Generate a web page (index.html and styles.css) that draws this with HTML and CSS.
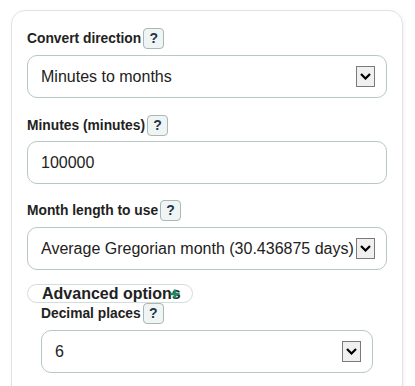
FILE: index.html
```html
<!DOCTYPE html>
<html lang="en">
<head>
    <meta charset="UTF-8">
    <meta name="viewport" content="width=device-width, initial-scale=1.0">
    <title>Minutes to Months</title>
    <link rel="stylesheet" href="styles.css">
</head>
<body>

    <div class="calc-card">
        <div class="label-row">
            <label for="direction">Convert direction</label>
            <button class="help" type="button">?</button>
        </div>
        <div class="select-wrap">
            <select id="direction">
                <option>Minutes to months</option>
                <option>Months to minutes</option>
            </select>
            <span class="arrow"><svg width="11" height="7" viewBox="0 0 11 7"><polyline points="1,1 5.5,5.5 10,1" fill="none" stroke="#000" stroke-width="2.2"/></svg></span>
        </div>

        <div class="label-row gap-top">
            <label for="minutes">Minutes (minutes)</label>
            <button class="help" type="button">?</button>
        </div>
        <input type="text" id="minutes" value="100000">

        <div class="label-row gap-top-sm">
            <label for="monthLength">Month length to use</label>
            <button class="help" type="button">?</button>
        </div>
        <div class="select-wrap">
            <select id="monthLength">
                <option>Average Gregorian month (30.436875 days)</option>
                <option>30 days</option>
                <option>31 days</option>
            </select>
            <span class="arrow"><svg width="11" height="7" viewBox="0 0 11 7"><polyline points="1,1 5.5,5.5 10,1" fill="none" stroke="#000" stroke-width="2.2"/></svg></span>
        </div>

        <div class="advanced">
            <div class="advanced-toggle">Advanced options<svg class="plus" width="10" height="10" viewBox="0 0 10 10"><path d="M5 0.5V9.5M0.5 5H9.5" stroke="#1f8a68" stroke-width="2.6"/></svg></div>
            <div class="advanced-body">
                <div class="label-row">
                    <label for="decimals">Decimal places</label>
                    <button class="help" type="button">?</button>
                </div>
                <div class="select-wrap">
                    <select id="decimals">
                        <option>6</option>
                        <option>4</option>
                        <option>2</option>
                    </select>
                    <span class="arrow"><svg width="11" height="7" viewBox="0 0 11 7"><polyline points="1,1 5.5,5.5 10,1" fill="none" stroke="#000" stroke-width="2.2"/></svg></span>
                </div>
            </div>
        </div>
    </div>

</body>
</html>
```

FILE: styles.css
```css
body {
    font-family: "Liberation Sans", Arial, sans-serif;
    margin: 0;
    color: #222;
    background: #fff;
}
.calc-card {
    margin: 10px 0 0 11px;
    width: 360px;
    padding: 17px 15px 30px 15px;
    border: 1px solid #dde4e3;
    border-radius: 14px;
    box-shadow: 1px 1px 4px rgba(0, 0, 0, 0.06);
}
.label-row {
    display: flex;
    align-items: center;
    height: 20px;
}
.gap-top {
    margin-top: 17px;
}
.gap-top-sm {
    margin-top: 16px;
}
label {
    font-size: 13.8px;
    font-weight: bold;
    color: #222;
}
.help {
    width: 21px;
    height: 21px;
    margin-left: 2px;
    padding: 0;
    border: 1px solid #a9b8b5;
    border-radius: 4px;
    background: #eef5f4;
    color: #1f3447;
    font-family: "Liberation Sans", Arial, sans-serif;
    font-size: 14px;
    font-weight: bold;
}
.select-wrap {
    position: relative;
    margin-top: 7px;
}
select, input {
    display: block;
    box-sizing: border-box;
    width: 100%;
    height: 43px;
    padding: 0 31px 0 13px;
    border: 1px solid #b9c8c5;
    border-radius: 10px;
    background: #fff;
    color: #222;
    font-family: "Liberation Sans", Arial, sans-serif;
    font-size: 16px;
    appearance: none;
    -webkit-appearance: none;
}
input {
    margin-top: 6px;
    padding-right: 13px;
}
.arrow {
    position: absolute;
    right: 12px;
    top: 11px;
    box-sizing: border-box;
    width: 19px;
    height: 21px;
    display: flex;
    align-items: center;
    justify-content: center;
    border: 1px solid #7a7a7a;
    background: #f0f0f0;
    pointer-events: none;
}
.advanced {
    margin-top: 14px;
}
.advanced-toggle {
    position: relative;
    box-sizing: border-box;
    width: 166px;
    height: 19px;
    line-height: 17px;
    padding-left: 14px;
    border: 1px solid #d3dedc;
    border-radius: 10px;
    font-size: 16px;
    font-weight: bold;
    color: #222;
}
.plus {
    position: absolute;
    left: 142px;
    top: 4px;
}
.advanced-body {
    padding: 0 14px;
}
```
